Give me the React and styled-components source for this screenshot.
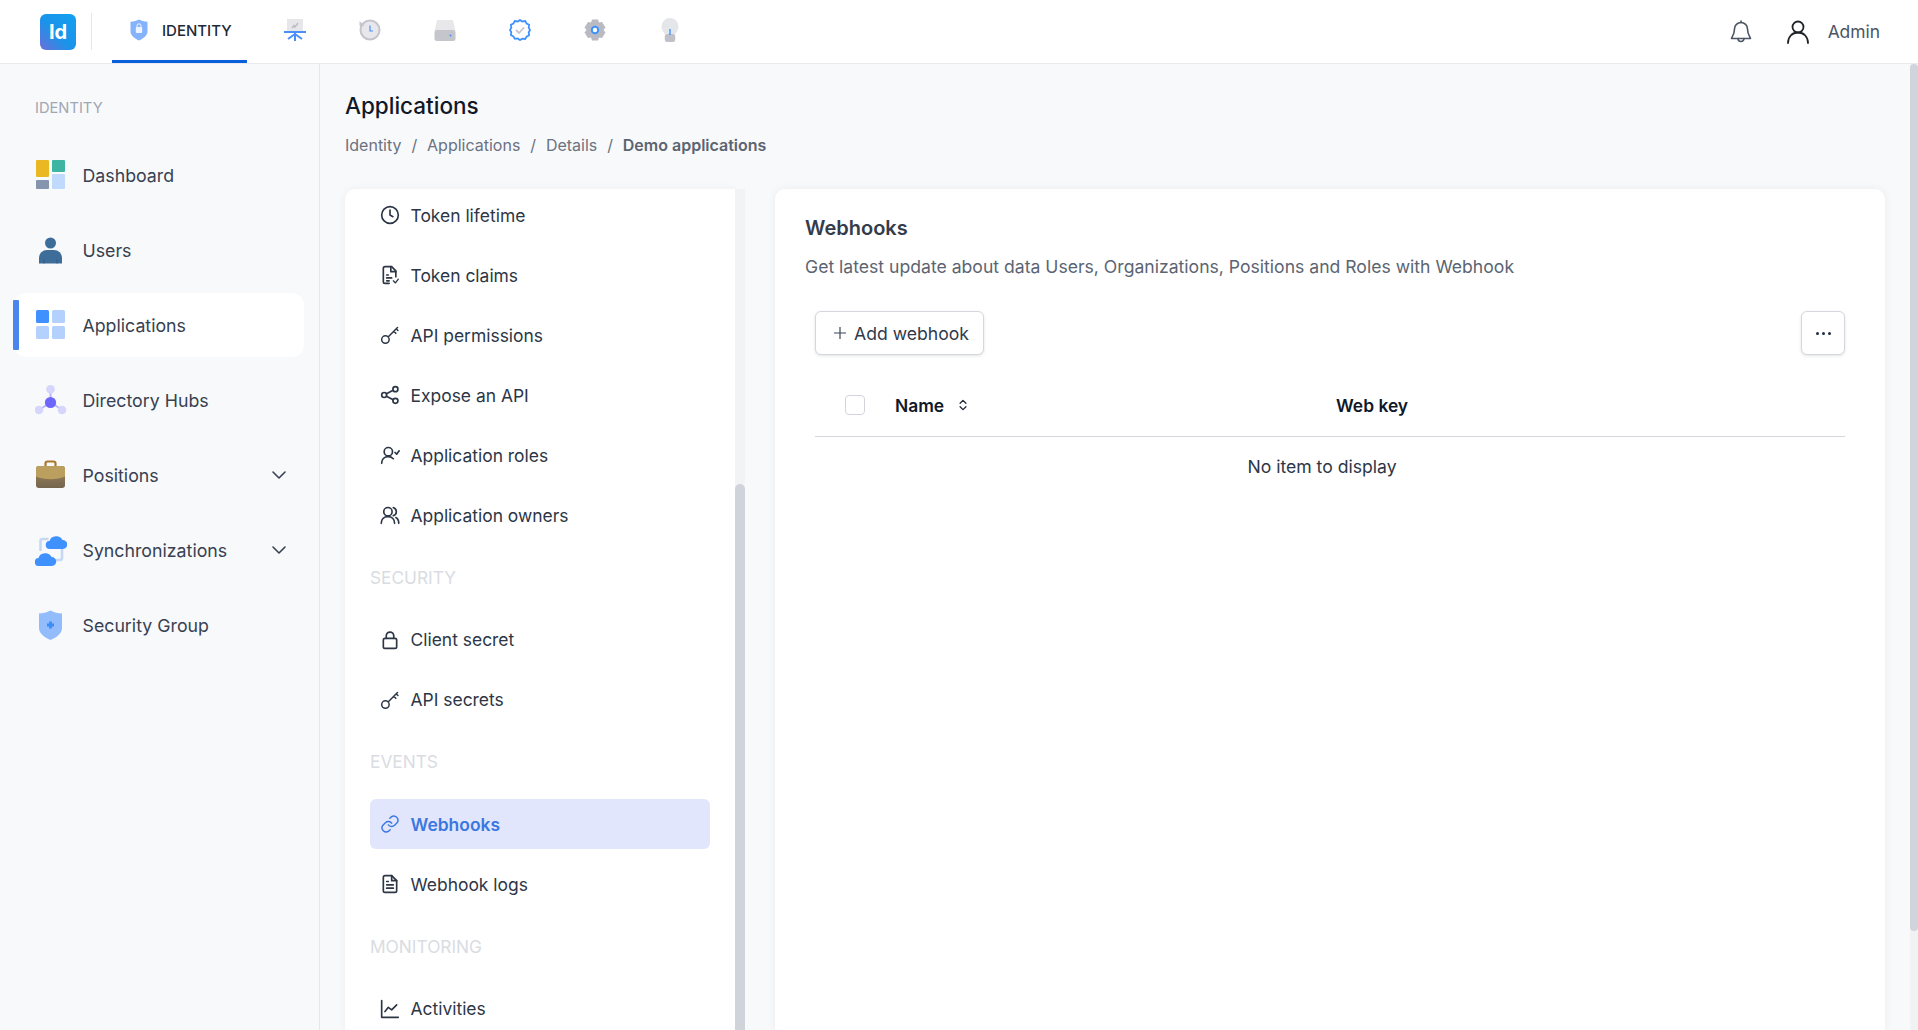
import React from 'react';
import styled, { createGlobalStyle } from 'styled-components';
import { ChevronDown, ChevronsUpDown } from 'lucide-react';

const Global = createGlobalStyle`
  html, body { margin: 0; padding: 0; height: 100%; overflow: hidden; }
  body { font-family: Inter, "Liberation Sans", sans-serif; background: #f8f9fb; color: #374151; }
  #root { height: 100%; }
  * { box-sizing: border-box; }
`;

const Page = styled.div`
  display: flex; flex-direction: column; height: 1030px; width: 1918px; overflow: hidden;
`;
const TopBar = styled.header`
  flex: 0 0 63px; display: flex; align-items: stretch; background: #fff;
  border-bottom: 1px solid #e9eaed; padding-left: 40px; padding-right: 38px;
`;
const Logo = styled.div`
  align-self: center; width: 36px; height: 36px; border-radius: 6px;
  background: linear-gradient(45deg, #6c6fd8 0%, #1a93ea 45%, #12a0f0 100%);
  color: #fff; font-weight: 700; font-size: 20px; display: flex; align-items: center; justify-content: center;
`;
const Separator = styled.div`
  align-self: center; width: 1px; height: 37px; background: #e5e7eb; margin: 0 20px 0 15px;
`;
const TabRow = styled.nav`
  display: flex; gap: 20px; flex: 1;
`;
const MainTab = styled.div`
  display: flex; align-items: center; gap: 14px; width: 135px; height: 63px; padding: 0 0 0 18px;
  border-bottom: 3px solid #0a5fdc; font-size: 15px; font-weight: 500; color: #1f2937; white-space: nowrap;
`;
const IconTab = styled.div`
  width: 55px; height: 62px; display: flex; align-items: center; justify-content: center; padding-bottom: 3px;
`;
const UserArea = styled.div`
  display: flex; align-items: center; font-size: 17.4px; color: #4b5563;
`;
const BellBox = styled.div`
  display: flex; margin-right: 36px;
`;
const UserBox = styled.div`
  display: flex; margin-right: 19px; margin-left: -1px;
`;
const Body = styled.div`
  flex: 1; display: flex; min-height: 0;
`;
const Sidebar = styled.aside`
  flex: 0 0 320px; border-right: 1px solid #e5e7eb; background: #f8f9fb; padding: 35px 15px 0 14px;
`;
const SideLabel = styled.div`
  font-size: 14.7px; color: #a1a7b3; padding-left: 21px; line-height: 18px; margin-bottom: 26px;
`;
const SideList = styled.div`
  display: flex; flex-direction: column; gap: 11px;
`;
const SideItem = styled.div`
  position: relative; height: 64px; display: flex; align-items: center; padding-left: 21px; padding-right: 13px;
  border-radius: 12px; font-size: 17.75px; color: #374151;
  background: ${p => (p.$active ? '#fff' : 'transparent')};
  &::before {
    content: ${p => (p.$active ? '""' : 'none')};
    position: absolute; left: -1px; top: 7px; bottom: 7px; width: 6px; background: #4a84ec; border-radius: 1px;
  }
`;
const SideIcon = styled.span`
  display: flex; width: 32px; height: 32px; margin-right: 15.5px; flex: none;
`;
const SideText = styled.span`
  flex: 1;
`;
const Content = styled.main`
  flex: 1; display: flex; flex-direction: column; min-width: 0; padding: 0 25px; overflow: hidden;
`;
const Title = styled.h1`
  margin: 26px 0 0; font-size: 22.5px; font-weight: 500; line-height: 32px; color: #111827;
`;
const Crumbs = styled.div`
  display: flex; gap: 9.9px; margin-top: 11px; font-size: 16px; line-height: 24px; color: #6b7280;
`;
const CrumbStrong = styled.span`
  font-weight: 600; color: #5b6470;
`;
const Panels = styled.div`
  flex: 1; display: flex; margin-top: 32px; min-height: 0;
`;
const MenuPanel = styled.div`
  flex: 0 0 390px; background: #fff; border-radius: 10px 0 0 0; padding: 1px 25px 0;
  box-shadow: 0 0 10px rgba(17, 24, 39, 0.05); overflow: hidden;
`;
const PanelBar = styled.div`
  flex: 0 0 10px; background: #f2f3f5; margin-right: 30px; display: flex; flex-direction: column;
`;
const PanelThumb = styled.div`
  margin-top: 295px; flex: 1; background: #d0d3da; border-radius: 5px 5px 0 0;
`;
const MenuItem = styled.div`
  height: 50px; margin-bottom: 10px; display: flex; align-items: center; gap: 10.5px; padding-left: 10px;
  border-radius: 6px; font-size: 17.45px; flex: none;
  font-weight: ${p => (p.$active ? 600 : 400)};
  color: ${p => (p.$active ? '#3b77e0' : '#2c3646')};
  background: ${p => (p.$active ? '#e1e6fd' : 'transparent')};
`;
const MenuIcon = styled.span`
  display: flex; width: 20px; height: 20px; flex: none;
`;
const MenuLabel = styled.div`
  height: 64.5px; display: flex; align-items: center; font-size: 17.3px; color: #d9dce2; padding-bottom: 10px;
`;
const WebhookPanel = styled.section`
  flex: 1; background: #fff; border-radius: 10px 10px 0 0; padding: 26px 40px 0 30px;
  box-shadow: 0 0 10px rgba(17, 24, 39, 0.06);
`;
const PanelTitle = styled.h2`
  margin: 0; font-size: 20px; font-weight: 600; line-height: 26px; color: #343c4c;
`;
const PanelDesc = styled.p`
  margin: 13px 0 0; font-size: 17.6px; line-height: 26px; color: #5b6472;
`;
const Toolbar = styled.div`
  display: flex; justify-content: space-between; margin: 31px 0 0 10px;
`;
const ToolButton = styled.button`
  height: 44px; min-width: 44px; padding: ${p => (p.$square ? '0' : '0 14px 0 17px')}; display: flex; align-items: center; justify-content: center; gap: 7px;
  background: #fff; border: 1px solid #d5d7de; border-radius: 6px; box-shadow: 0 1px 3px rgba(17, 24, 39, 0.12);
  font-family: inherit; font-size: 17.6px; color: #2f3a4c;
`;
const Dots = styled.span`
  display: flex; gap: 3px;
`;
const Dot = styled.i`
  width: 3px; height: 3px; background: #1f2d44; border-radius: 50%; display: block;
`;
const TableHead = styled.div`
  display: flex; align-items: center; height: 63px; margin: 19px 0 0 10px; padding-left: 30px;
  border-bottom: 1px solid #d6d8de;
`;
const Check = styled.span`
  width: 20px; height: 20px; border: 1px solid #d1d5db; border-radius: 4px; background: #fff; margin-right: 30px; flex: none;
`;
const NameCol = styled.div`
  width: 441px; display: flex; align-items: center; gap: 12px; font-size: 17.4px; font-weight: 600; color: #111827;
`;
const KeyCol = styled.div`
  font-size: 17.4px; font-weight: 600; color: #111827;
`;
const Empty = styled.div`
  margin-right: 6px; text-align: center; font-size: 17.6px; line-height: 24px; padding-top: 18px; color: #2c3646;
`;
const PageBar = styled.div`
  flex: 0 0 8px; background: #f1f2f4; display: flex; flex-direction: column;
`;
const PageThumb = styled.div`
  height: 867px; background: #d1d4da; border-radius: 4px;
`;
const Row = styled.div`
  display: flex; flex: 1; min-width: 0; min-height: 0;
`;

const Sv = ({ children, s = 20, vb = '0 0 24 24', stroke = '#2c3646', w = 2 }) => (
  <svg width={s} height={s} viewBox={vb} fill="none" stroke={stroke} strokeWidth={w} strokeLinecap="round" strokeLinejoin="round">{children}</svg>
);

const I = {
  clock: <Sv><circle cx="12" cy="12" r="10" /><path d="M12 6v6l3.5 2" /></Sv>,
  claims: <Sv><path d="M11 22H6a2 2 0 0 1-2-2V4a2 2 0 0 1 2-2h8l5 5v7" /><path d="M13 2v6h6M8 12h2M8 15.500h6M8 19h3" /><path d="M16 19l2.500 2.500L22 17" strokeWidth="1.600" /></Sv>,
  key: <Sv w={1.8}><circle cx="6.500" cy="17.500" r="4.500" /><path d="M10 14L21 3M16.500 7.500l2.500 2.500M19.500 4.500l2 2" /></Sv>,
  share: <Sv><circle cx="18.500" cy="5" r="3" /><circle cx="5" cy="12" r="3" /><circle cx="18.500" cy="19" r="3" /><path d="M7.800 13.500l8 4.200M15.800 6.400l-8 4.200" /></Sv>,
  role: <Sv><circle cx="10" cy="8" r="5" /><path d="M2 22c0-5 3.500-8 8-8 2.500 0 4.500 1 6 2.500" /><path d="M18 9l2 2 3-4" /></Sv>,
  owners: <Sv><circle cx="9.500" cy="8" r="5" /><path d="M1.500 22c0-5 3.500-8 8-8s8 3 8 8" /><path d="M16 3.200a5 5 0 0 1 0 9.600M19 15c2 1 3.500 3.500 3.500 7" /></Sv>,
  lock: <Sv><rect x="4" y="10" width="16" height="12" rx="2" /><path d="M7.500 10V7a4.500 4.500 0 0 1 9 0v3" /></Sv>,
  link: <Sv stroke="#3b77e0" w={1.7}><path d="M10 13a5 5 0 0 0 7.500.5l3-3a5 5 0 0 0-7-7l-1.700 1.700" /><path d="M14 11a5 5 0 0 0-7.500-.5l-3 3a5 5 0 0 0 7 7l1.700-1.700" /></Sv>,
  file: <Sv><path d="M14 2H6a2 2 0 0 0-2 2v16a2 2 0 0 0 2 2h12a2 2 0 0 0 2-2V8z" /><path d="M14 2v6h6M8 13h8M8 17h8M8 9h2" /></Sv>,
  chart: <Sv><path d="M2 2v20h20" /><path d="M6 15l4-5 4 3 6-6" /></Sv>,
};

const Dashboard = () => (
  <svg width="32" height="32" viewBox="0 0 32 32">
    <rect x="1" y="1" width="13" height="17" rx="1" fill="#e9b823" />
    <rect x="1" y="21" width="13" height="9" rx="1" fill="#8595ad" />
    <rect x="17" y="1" width="13" height="12" rx="1" fill="#3eb4a3" />
    <rect x="17" y="15" width="13" height="15" rx="1" fill="#bfdafd" />
  </svg>
);
const Users = () => (
  <svg width="32" height="32" viewBox="0 0 32 32">
    <circle cx="15.500" cy="9" r="5.500" fill="#3f6d99" />
    <path d="M4 29.500V24a8 8 0 0 1 8-8h7a8 8 0 0 1 8 8v5.500z" fill="#3f6d99" />
    <path d="M9 25.500v4M22 25.500v4" stroke="#2e5a85" strokeWidth="1" />
  </svg>
);
const Apps = () => (
  <svg width="32" height="32" viewBox="0 0 32 32">
    <rect x="1" y="1" width="13" height="13" rx="1.500" fill="#3f92fe" />
    <rect x="17" y="1" width="13" height="13" rx="1.500" fill="#b3d1fc" />
    <rect x="1" y="17" width="13" height="13" rx="1.500" fill="#b3d1fc" />
    <rect x="17" y="17" width="13" height="13" rx="1.500" fill="#b3d1fc" />
  </svg>
);
const Hubs = () => (
  <svg width="32" height="32" viewBox="0 0 32 32">
    <path d="M15.500 6v10M15.500 18L4.500 26M15.500 18L27 26" stroke="#b9b9fb" strokeWidth="2" />
    <circle cx="15.500" cy="5.300" r="4.300" fill="#d6d6fc" />
    <circle cx="3.900" cy="26" r="4.300" fill="#d6d6fc" />
    <circle cx="27" cy="26" r="4.300" fill="#d6d6fc" />
    <circle cx="15.500" cy="18.500" r="5.600" fill="#6c66fc" />
  </svg>
);
const Positions = () => (
  <svg width="32" height="32" viewBox="0 0 32 32">
    <defs><linearGradient id="pg" x1="0" y1="0" x2="0" y2="1"><stop offset="0.500" stopColor="#8a7555" /><stop offset="1" stopColor="#75654d" /></linearGradient></defs>
    <path d="M10.500 7V4.500a2 2 0 0 1 2-2h6a2 2 0 0 1 2 2V7" stroke="#a9782c" strokeWidth="2.200" fill="none" />
    <rect x="1" y="7" width="29" height="22" rx="3" fill="url(#pg)" />
    <path d="M1 10a3 3 0 0 1 3-3h23a3 3 0 0 1 3 3v7.500c-8 3.500-21 3.500-29 0z" fill="#bb9f5f" />
  </svg>
);
const Sync = () => (
  <svg width="32" height="32" viewBox="0 0 32 32">
    <path d="M5.500 17V7a2 2 0 0 1 2-2h6M27 15v9a2 2 0 0 1-2 2h-6" stroke="#c7d8f2" strokeWidth="2.600" fill="none" />
    <path d="M15 15a4 4 0 0 1-.5-8 7 6.500 0 0 1 13-1 4.500 4.500 0 0 1 .5 9z" fill="#3f92fe" />
    <path d="M4 32a4 4 0 0 1-.5-8 7 6.500 0 0 1 13-1 4.500 4.500 0 0 1 .5 9z" fill="#3f92fe" />
  </svg>
);
const Shield = () => (
  <svg width="32" height="32" viewBox="0 0 32 32">
    <path d="M15.500 1.500C19 3.500 23 4.500 27 4.500v14.500c0 6-6 9.500-11.500 12C10 28.500 4 25 4 19V4.500c4 0 8-1 11.500-3z" fill="#93bcfd" />
    <path d="M15.500 12.500v7M12 16h7" stroke="#3a8cf8" strokeWidth="2.800" />
  </svg>
);
const ShieldTop = () => (
  <svg width="18" height="22" viewBox="0 0 18 22">
    <path d="M9 0.500c2 1.300 5 2 8.500 2.300v9.700c0 4-4 7-8.500 9-4.500-2-8.500-5-8.500-9V2.800C4 2.500 7 1.800 9 0.500z" fill="#85b3fb" />
    <rect x="5.800" y="8" width="6.400" height="6" rx="1" fill="#fff" opacity=".85" />
    <path d="M7 8V6.800a2 2 0 0 1 4 0V8" stroke="#fff" strokeWidth="1" fill="none" opacity=".85" />
  </svg>
);
const Board = () => (
  <svg width="22" height="22" viewBox="0 0 22 22">
    <rect x="3" y="0" width="16" height="12" fill="#e7e7ea" />
    <path d="M8 9l2-2.500 1 1.500 3-4" stroke="#bcbcc4" strokeWidth="1.400" fill="none" />
    <path d="M0 13h22" stroke="#4a90fa" strokeWidth="2" />
    <path d="M11 13v9M11 15L4 20M11 15l7 5" stroke="#4a90fa" strokeWidth="2" fill="none" />
  </svg>
);
const History = () => (
  <svg width="22" height="22" viewBox="0 0 22 22">
    <circle cx="11" cy="11" r="9.500" fill="#e8e8ec" stroke="#c4c5cc" strokeWidth="2" />
    <path d="M0.500 2v5h5z" fill="#c4c5cc" />
    <path d="M11 6.500V12h3" stroke="#4a90fa" strokeWidth="1.200" fill="none" />
  </svg>
);
const Drive = () => (
  <svg width="22" height="22" viewBox="0 0 22 22">
    <path d="M3 1h16l2.500 11H.5z" fill="#e8e8ea" />
    <rect x="0.500" y="11" width="21" height="11" rx="2.500" fill="#c5c5cc" />
    <circle cx="16.500" cy="16.500" r="1" fill="#4a90fa" />
  </svg>
);
const Badge = () => (
  <svg width="22" height="22" viewBox="0 0 22 22">
    <path d="M11 1l2.400 1.500 2.800-.4 1.400 2.400 2.500 1.300-.4 2.800L21 11l-1.300 2.500.4 2.800-2.500 1.300-1.400 2.400-2.800-.4L11 21l-2.400-1.600-2.800.4-1.400-2.400-2.500-1.300.4-2.800L1 11l1.300-2.400-.4-2.800 2.500-1.300 1.400-2.400 2.800.4z" fill="#fff" stroke="#3f92fe" strokeWidth="1.800" />
    <path d="M7 11l3 3 5-5.500" stroke="#c4c5cc" strokeWidth="1.800" fill="none" />
  </svg>
);
const Gear = () => (
  <svg width="22" height="22" viewBox="0 0 22 22">
    <path d="M8 0.500h6l1 3 3-.5 3.500 5.500L19.500 11l2 2.500L18 19l-3-.5-1 3H8l-1-3-3 .5L.5 13.500 2.500 11 .5 8.500 4 3l3 .5z" fill="#b9bac2" />
    <circle cx="11" cy="11" r="3.200" fill="#fff" stroke="#3f92fe" strokeWidth="2" />
  </svg>
);
const Bulb = () => (
  <svg width="18" height="24" viewBox="0 0 18 24">
    <path d="M9 0a8.500 8.500 0 0 1 8.500 8.500c0 3.500-2 5-3 7.500h-11c-1-2.500-3-4-3-7.500A8.500 8.500 0 0 1 9 0z" fill="#e5e6e9" />
    <rect x="3.800" y="16" width="10.400" height="8" rx="2.200" fill="#c0c1c8" />
    <path d="M9 11v6" stroke="#3f92fe" strokeWidth="1.400" />
  </svg>
);

const sideItems = [
  ['Dashboard', <Dashboard />],
  ['Users', <Users />],
  ['Applications', <Apps />, true],
  ['Directory Hubs', <Hubs />],
  ['Positions', <Positions />, false, true],
  ['Synchronizations', <Sync />, false, true],
  ['Security Group', <Shield />],
];

const menu = [
  ['i', 'Token lifetime', 'clock'],
  ['i', 'Token claims', 'claims'],
  ['i', 'API permissions', 'key'],
  ['i', 'Expose an API', 'share'],
  ['i', 'Application roles', 'role'],
  ['i', 'Application owners', 'owners'],
  ['l', 'SECURITY'],
  ['i', 'Client secret', 'lock'],
  ['i', 'API secrets', 'key'],
  ['l', 'EVENTS'],
  ['i', 'Webhooks', 'link', true],
  ['i', 'Webhook logs', 'file'],
  ['l', 'MONITORING'],
  ['i', 'Activities', 'chart'],
];

export default function App() {
  return (
    <Page>
      <Global />
      <TopBar>
        <Logo>Id</Logo>
        <Separator />
        <TabRow>
          <MainTab><ShieldTop />IDENTITY</MainTab>
          <IconTab><Board /></IconTab>
          <IconTab><History /></IconTab>
          <IconTab><Drive /></IconTab>
          <IconTab><Badge /></IconTab>
          <IconTab><Gear /></IconTab>
          <IconTab><Bulb /></IconTab>
        </TabRow>
        <UserArea>
          <BellBox>
            <svg width="22" height="24" viewBox="0 0 22 24" fill="none" stroke="#4b5563" strokeWidth="1.600" strokeLinecap="round" strokeLinejoin="round">
              <path d="M11 2.500a6.500 6.500 0 0 0-6.500 6.500c0 6-3 8.500-3 9.500h19c0-1-3-3.500-3-9.500A6.500 6.500 0 0 0 11 2.500z" />
              <path d="M8 18.500a3 3 0 0 0 6 0M11 1v1.500" />
            </svg>
          </BellBox>
          <UserBox>
            <svg width="22" height="24" viewBox="0 0 22 24" fill="none" stroke="#1f2328" strokeWidth="1.800" strokeLinecap="round">
              <circle cx="11" cy="7" r="5.500" />
              <path d="M1 23c0-6 4-10.500 10-10.500S21 17 21 23" />
            </svg>
          </UserBox>
          Admin
        </UserArea>
      </TopBar>
      <Body>
        <Sidebar>
          <SideLabel>IDENTITY</SideLabel>
          <SideList>
            {sideItems.map(([t, ic, active, chev]) => (
              <SideItem key={t} $active={active}>
                <SideIcon>{ic}</SideIcon>
                <SideText>{t}</SideText>
                {chev && <ChevronDown size={24} color="#374151" strokeWidth={1.6} />}
              </SideItem>
            ))}
          </SideList>
        </Sidebar>
        <Row>
          <Content>
            <Title>Applications</Title>
            <Crumbs>
              <span>Identity</span><span>/</span><span>Applications</span><span>/</span><span>Details</span><span>/</span>
              <CrumbStrong>Demo applications</CrumbStrong>
            </Crumbs>
            <Panels>
              <MenuPanel>
                {menu.map(([k, t, ic, active]) =>
                  k === 'l' ? (
                    <MenuLabel key={t}>{t}</MenuLabel>
                  ) : (
                    <MenuItem key={t} $active={active}>
                      <MenuIcon>{I[ic]}</MenuIcon>
                      {t}
                    </MenuItem>
                  )
                )}
              </MenuPanel>
              <PanelBar><PanelThumb /></PanelBar>
              <WebhookPanel>
                <PanelTitle>Webhooks</PanelTitle>
                <PanelDesc>Get latest update about data Users, Organizations, Positions and Roles with Webhook</PanelDesc>
                <Toolbar>
                  <ToolButton>
                    <svg width="14" height="14" viewBox="0 0 14 14" stroke="#3a4658" strokeWidth="1.200" fill="none"><path d="M7 1v12M1 7h12" /></svg>
                    Add webhook
                  </ToolButton>
                  <ToolButton $square><Dots><Dot /><Dot /><Dot /></Dots></ToolButton>
                </Toolbar>
                <TableHead>
                  <Check />
                  <NameCol>Name <ChevronsUpDown size={14} color="#1f2937" strokeWidth={2.200} /></NameCol>
                  <KeyCol>Web key</KeyCol>
                </TableHead>
                <Empty>No item to display</Empty>
              </WebhookPanel>
            </Panels>
          </Content>
          <PageBar><PageThumb /></PageBar>
        </Row>
      </Body>
    </Page>
  );
}
